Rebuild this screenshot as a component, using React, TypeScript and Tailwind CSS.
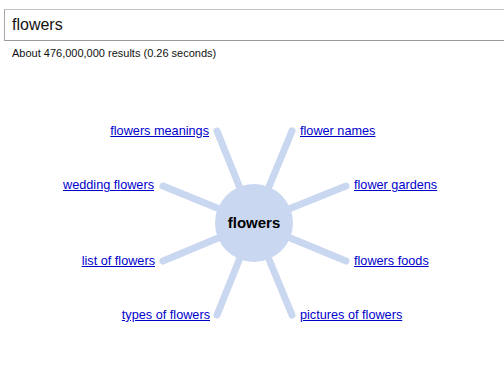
import React from 'react';

const CX = 254;
const CY = 223;

const spokes = [
    { x: 217, y: 131 },
    { x: 292, y: 131 },
    { x: 163, y: 186 },
    { x: 346, y: 186 },
    { x: 163, y: 261 },
    { x: 346, y: 261 },
    { x: 217, y: 315 },
    { x: 292, y: 315 },
];

const leftLinks = [
    { label: 'flowers meanings', right: 295, top: 124 },
    { label: 'wedding flowers', right: 350, top: 178 },
    { label: 'list of flowers', right: 349, top: 254 },
    { label: 'types of flowers', right: 294, top: 308 },
];

const rightLinks = [
    { label: 'flower names', left: 300, top: 124 },
    { label: 'flower gardens', left: 354, top: 178 },
    { label: 'flowers foods', left: 354, top: 254 },
    { label: 'pictures of flowers', left: 300, top: 308 },
];

export default function App() {
    return (
        <div className="relative w-[504px] h-[380px] overflow-hidden bg-white font-['Liberation_Sans',Arial,sans-serif]">
            {/* Search header */}
            <div className="pt-[9px] pl-[4px]">
                <div className="w-[540px] h-[32px] border border-[#c2c2c2] border-l-[#a8a8a8] border-b-[#9a9a9a] flex items-center pl-[7px] text-[16px] text-[#111]">
                    flowers
                </div>
            </div>
            <div className="pl-[12px] pt-[5px] text-[11px] leading-[14px] text-[#111]">
                About 476,000,000 results (0.26 seconds)
            </div>

            {/* Wonder wheel */}
            <svg className="absolute left-0 top-0" width="504" height="380" viewBox="0 0 504 380">
                {spokes.map((s, i) => (
                    <line
                        key={i}
                        x1={CX}
                        y1={CY}
                        x2={s.x}
                        y2={s.y}
                        stroke="#c9d7f1"
                        strokeWidth="7"
                        strokeLinecap="round"
                    />
                ))}
                <circle cx={CX} cy={CY} r="39" fill="#c9d7f1" />
                <text
                    x={CX}
                    y={CY + 5}
                    textAnchor="middle"
                    fontFamily="Liberation Sans, Arial, sans-serif"
                    fontWeight="bold"
                    fontSize="15"
                    fill="#000"
                >
                    flowers
                </text>
            </svg>

            {leftLinks.map((l) => (
                <a
                    key={l.label}
                    href="#"
                    className="absolute text-[12.7px] leading-[15px] text-[#0000cc] underline whitespace-nowrap"
                    style={{ right: l.right, top: l.top }}
                >
                    {l.label}
                </a>
            ))}
            {rightLinks.map((l) => (
                <a
                    key={l.label}
                    href="#"
                    className="absolute text-[12.7px] leading-[15px] text-[#0000cc] underline whitespace-nowrap"
                    style={{ left: l.left, top: l.top }}
                >
                    {l.label}
                </a>
            ))}
        </div>
    );
}
